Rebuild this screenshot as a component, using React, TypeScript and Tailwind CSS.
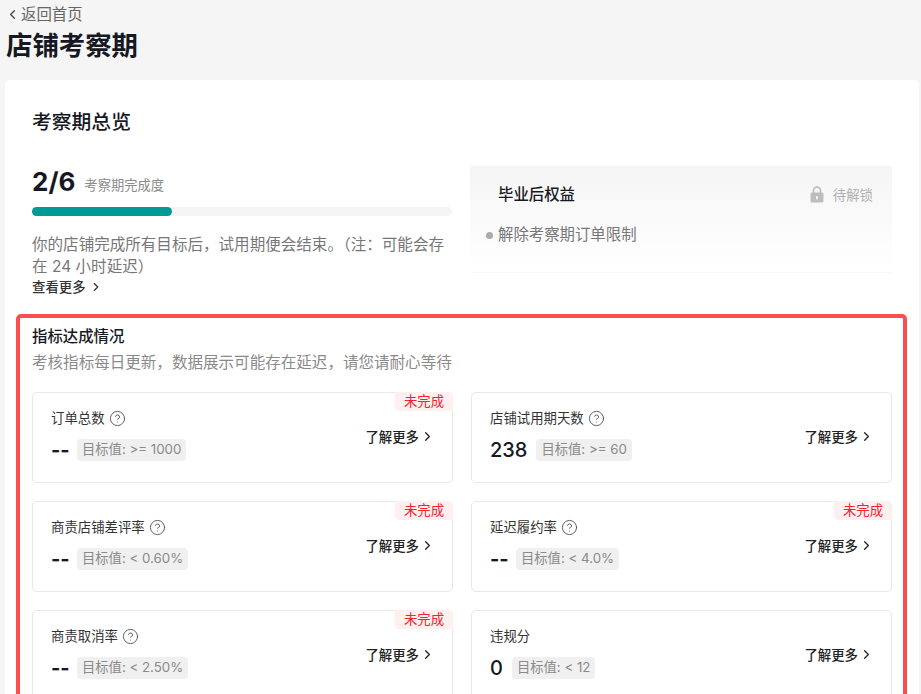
import { ChevronLeft, ChevronRight, CircleHelp } from 'lucide-react'

const metrics = [
  { name: '订单总数', value: '--', target: '目标值: >= 1000', failed: true, help: true },
  { name: '店铺试用期天数', value: '238', target: '目标值: >= 60', failed: false, help: true },
  { name: '商责店铺差评率', value: '--', target: '目标值: < 0.60%', failed: true, help: true },
  { name: '延迟履约率', value: '--', target: '目标值: < 4.0%', failed: true, help: true },
  { name: '商责取消率', value: '--', target: '目标值: < 2.50%', failed: true, help: true },
  { name: '违规分', value: '0', target: '目标值: < 12', failed: false, help: false },
]

function LockIcon() {
  return (
    <svg width="14" height="17" viewBox="0 0 14 17" fill="none">
      <path d="M3.5 7V4.6a3.5 3.5 0 0 1 7 0V7" stroke="#bdbdbd" strokeWidth="1.7" />
      <rect x="0.5" y="6.5" width="13" height="10" rx="1.5" fill="#bdbdbd" />
      <rect x="6.2" y="10" width="1.6" height="3.6" rx="0.8" fill="#fff" />
    </svg>
  )
}

function MetricCard({ metric }: { metric: (typeof metrics)[number] }) {
  return (
    <div className="relative flex h-[91px] items-center justify-between rounded-[5px] border border-[#e8e8e8] bg-white pl-[18px] pr-[17px]">
      {metric.failed && (
        <div className="absolute right-[-1px] top-[-1px] flex h-[19px] w-[58px] items-center justify-center rounded-bl-[4px] rounded-tr-[5px] bg-[#fff0f0] text-[13.4px] text-[#f5222d]">
          未完成
        </div>
      )}
      <div className="mb-[6px] flex flex-col">
        <div className="flex h-[20px] items-center gap-[4px] text-[13.4px] leading-[20px] text-[#333]">
          <span>{metric.name}</span>
          {metric.help && <CircleHelp size={17} strokeWidth={1.2} className="text-[#444]" />}
        </div>
        <div className="mt-[11px] flex h-[22px] items-center gap-[9px]">
          <span className={metric.value === '--' ? 'w-[17px] whitespace-nowrap text-[20px] font-bold text-[#161823]' : 'text-[20px] font-medium text-[#161823]'}>
            {metric.value}
          </span>
          <span className="flex h-[22px] items-center rounded-[4px] bg-[#f0f0f0] px-[5px] text-[13.3px] text-[#8a8a8a]">
            {metric.target}
          </span>
        </div>
      </div>
      <div className="mb-[1px] flex items-center gap-[1px] text-[13.4px] font-medium text-[#222]">
        <span>了解更多</span>
        <ChevronRight size={15} strokeWidth={2} />
      </div>
    </div>
  )
}

export default function App() {
  return (
    <div className="h-[694px] overflow-hidden bg-[#f5f5f5] font-['Inter','Noto_Sans_CJK_SC',sans-serif]">
      <div className="flex h-[29px] items-center pl-[5px] text-[15.4px] text-[#666]">
        <ChevronLeft size={15} strokeWidth={2} className="text-[#444]" />
        <span className="ml-[1px]">返回首页</span>
      </div>
      <h1 className="mt-[-1px] h-[52px] pl-[6px] text-[26.4px] font-semibold leading-[34px] text-[#161823]">店铺考察期</h1>

      <div className="ml-[5px] mr-[2px] rounded-t-[5px] bg-white pt-[27px]">
        <h2 className="pl-[27px] text-[19.8px] font-medium leading-[30px] text-[#161823]">考察期总览</h2>

        <div className="mt-[29px] flex pl-[27px]">
          <div className="w-[420px]">
            <div className="flex h-[32px] items-center">
              <span className="mt-[-2px] text-[26px] font-bold text-[#161823]">2/6</span>
              <span className="ml-[9px] mt-[7px] text-[13.3px] text-[#8a8a8a]">考察期完成度</span>
            </div>
            <div className="mt-[9px] h-[9px] rounded-full bg-[#f5f5f5]">
              <div className="h-full w-1/3 rounded-full bg-[#009995]" />
            </div>
            <p className="mt-[18px] text-[15.55px] leading-[22px] text-[#777]">
              你的店铺完成所有目标后，试用期便会结束。（注：可能会存在 24 小时延迟）
            </p>
            <div className="mt-[-1px] flex h-[20px] items-center gap-[3px] text-[13.4px] font-medium text-[#333]">
              <span>查看更多</span>
              <ChevronRight size={14} strokeWidth={2} />
            </div>
          </div>

          <div className="ml-[18px] h-[107px] w-[422px] rounded-[3px] border-b border-[#f8f8f8] bg-gradient-to-b from-[#f5f5f5] to-white">
            <div className="flex items-center justify-between pl-[28px] pr-[19px] pt-[18px]">
              <span className="text-[15.4px] font-medium leading-[22px] text-[#161823]">毕业后权益</span>
              <span className="flex items-center gap-[9px] text-[13.4px] text-[#b0b0b0]">
                <LockIcon />
                待解锁
              </span>
            </div>
            <div className="mt-[18px] flex items-center gap-[5px] pl-[16px] text-[15.4px] leading-[22px] text-[#777]">
              <span className="h-[7px] w-[7px] rounded-full bg-[#aaa]" />
              <span>解除考察期订单限制</span>
            </div>
          </div>
        </div>

        <div className="ml-[11px] mr-[12px] mt-[17px] rounded-[5px] border-[4px] border-[#fb4f4f] px-[12px] pb-[20px] pt-[6px]">
          <div className="text-[15.4px] font-medium leading-[26px] text-[#161823]">指标达成情况</div>
          <div className="mt-[1px] text-[15.55px] leading-[24px] text-[#8a8a8a]">考核指标每日更新，数据展示可能存在延迟，请您请耐心等待</div>
          <div className="mt-[17px] grid grid-cols-[421px_421px] gap-x-[18px] gap-y-[18px]">
            {metrics.map((m) => (
              <MetricCard key={m.name} metric={m} />
            ))}
          </div>
        </div>
      </div>
    </div>
  )
}
